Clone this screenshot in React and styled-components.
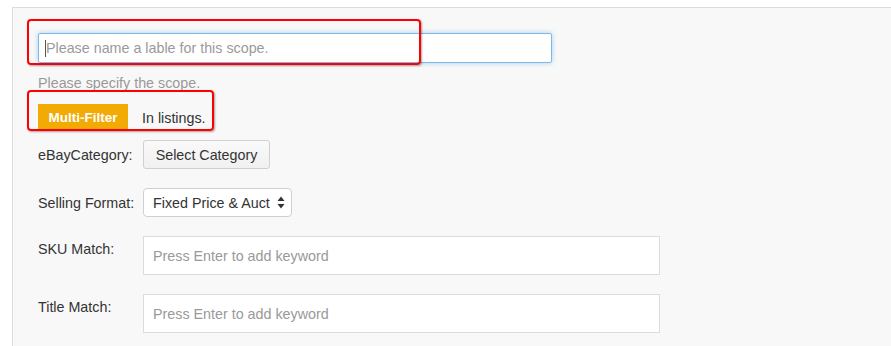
import React from 'react';
import styled, { createGlobalStyle } from 'styled-components';

const GlobalStyle = createGlobalStyle`
  html, body {
    margin: 0;
    padding: 0;
    background: #fff;
    font-family: "Liberation Sans", Arial, sans-serif;
    font-size: 14px;
    color: #333;
  }
  * {
    box-sizing: border-box;
  }
`;

const Panel = styled.div`
  position: relative;
  margin: 7px 0 0 12px;
  min-height: calc(100vh - 7px);
  background: #f8f8f8;
  border-top: 1px solid #dcdcdc;
  border-left: 1px solid #dcdcdc;
  padding: 25px 0 0 25px;
`;

const NameInput = styled.input`
  display: block;
  width: 514px;
  height: 30px;
  padding: 0 7px;
  border: 1px solid #7cb8ec;
  border-radius: 2px;
  box-shadow: 0 0 5px rgba(102, 175, 233, 0.55);
  background: linear-gradient(#555, #555) no-repeat 6px 6px / 1px 17px, #fff;
  font: inherit;
  font-size: 14.3px;
  color: #333;
  outline: none;

  &::placeholder {
    color: #9a9a9a;
  }
`;

const Hint = styled.p`
  margin: 10px 0 0;
  line-height: 20px;
  font-size: 14.3px;
  color: #999;
`;

const TabRow = styled.div`
  display: flex;
  align-items: center;
  margin-top: 11px;
  height: 27px;
`;

const Tab = styled.button`
  height: 27px;
  padding: 0;
  width: ${(p) => p.$width}px;
  border: none;
  border-radius: 0;
  font-family: inherit;
  font-size: ${(p) => (p.$active ? '13.5px' : '14.3px')};
  font-weight: ${(p) => (p.$active ? 'bold' : 'normal')};
  color: ${(p) => (p.$active ? '#fff' : '#333')};
  background: ${(p) => (p.$active ? '#f2aa05' : 'transparent')};
  text-align: ${(p) => (p.$active ? 'center' : 'left')};
  padding-left: ${(p) => (p.$active ? 0 : 14)}px;
`;

const Form = styled.div`
  display: flex;
  flex-direction: column;
  gap: 19px;
  margin-top: 9px;
`;

const Row = styled.div`
  display: flex;
  align-items: ${(p) => (p.$top ? 'flex-start' : 'center')};
`;

const Label = styled.label`
  width: 105px;
  flex: none;
  line-height: 20px;
  font-size: 14.3px;
  color: #333;
  padding-top: ${(p) => (p.$top ? 3 : 0)}px;
`;

const Button = styled.button`
  height: 29px;
  width: 127px;
  padding: 0;
  border: 1px solid #d0d0d0;
  border-radius: 3px;
  background: linear-gradient(#fafafa, #f0f0f0);
  font-family: inherit;
  font-size: 14.3px;
  color: #333;
`;

const Select = styled.div`
  display: flex;
  align-items: center;
  justify-content: space-between;
  width: 149px;
  height: 29px;
  padding: 0 6px 0 9px;
  border: 1px solid #d0d0d0;
  border-radius: 4px;
  background: #fff;
  font-size: 14.3px;
  color: #333;
  white-space: nowrap;
`;

const KeywordInput = styled.input`
  display: block;
  width: 517px;
  height: 39px;
  padding: 0 9px;
  border: 1px solid #dcdcdc;
  border-radius: 0;
  background: #fff;
  font: inherit;
  font-size: 14.3px;
  color: #333;
  outline: none;

  &::placeholder {
    color: #999;
  }
`;

const Annotation = styled.div`
  position: absolute;
  left: ${(p) => p.$x}px;
  top: ${(p) => p.$y}px;
  width: ${(p) => p.$w}px;
  height: ${(p) => p.$h}px;
  border: 2px solid #f00;
  border-radius: 4px;
  box-shadow: 1px 1px 2px rgba(0, 0, 0, 0.35);
  pointer-events: none;
`;

const Arrows = () => (
  <svg width="8" height="13" viewBox="0 0 8 13">
    <path d="M4 0.5 L7.5 5 H0.5 Z" fill="#333" />
    <path d="M4 12.5 L7.5 8 H0.5 Z" fill="#333" />
  </svg>
);

export default function App() {
  return (
    <>
      <GlobalStyle />
      <Panel>
        <NameInput placeholder="Please name a lable for this scope." />
        <Hint>Please specify the scope.</Hint>
        <TabRow>
          <Tab $active $width={90}>Multi-Filter</Tab>
          <Tab $width={80}>In listings.</Tab>
        </TabRow>
        <Form>
          <Row>
            <Label>eBayCategory:</Label>
            <Button>Select Category</Button>
          </Row>
          <Row>
            <Label>Selling Format:</Label>
            <Select>
              <span>Fixed Price &amp; Auct</span>
              <Arrows />
            </Select>
          </Row>
          <Row $top>
            <Label $top>SKU Match:</Label>
            <KeywordInput placeholder="Press Enter to add keyword" />
          </Row>
          <Row $top>
            <Label $top>Title Match:</Label>
            <KeywordInput placeholder="Press Enter to add keyword" />
          </Row>
        </Form>
        <Annotation $x={14} $y={11} $w={394} $h={46} />
        <Annotation $x={14} $y={82} $w={187} $h={41} />
      </Panel>
    </>
  );
}
